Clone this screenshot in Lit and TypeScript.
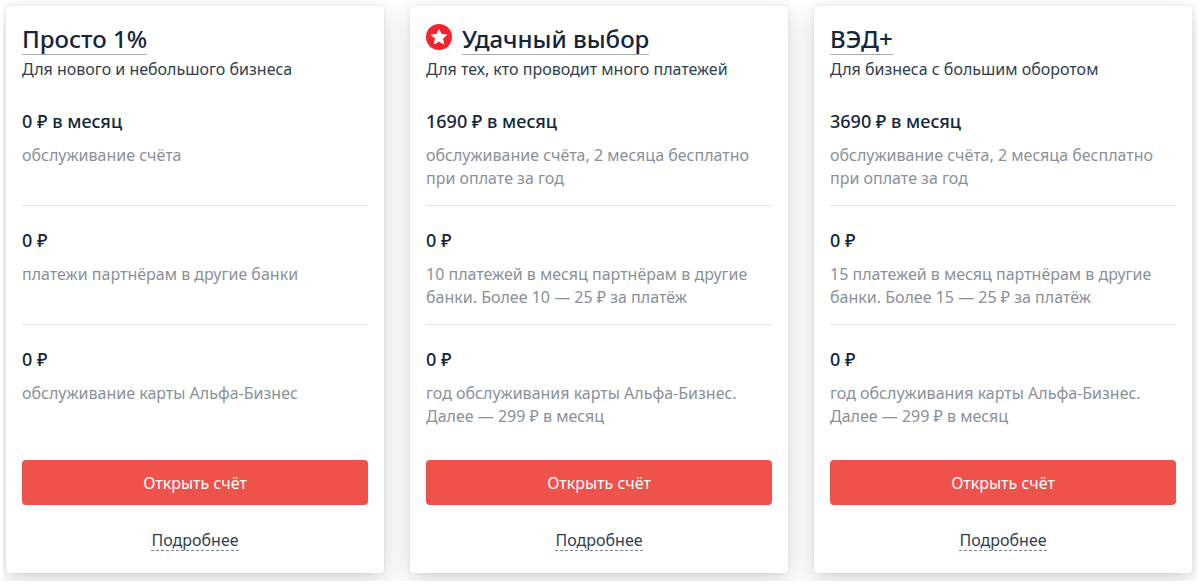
import { LitElement, html, css, svg } from "lit";
import { customElement, property } from "lit/decorators.js";

interface Feature { value: string; text: string; }
interface Plan { name: string; subtitle: string; featured?: boolean; features: Feature[]; }

const plans: Plan[] = [
  {
    name: "Просто 1%",
    subtitle: "Для нового и небольшого бизнеса",
    features: [
      { value: "0 ₽ в месяц", text: "обслуживание счёта" },
      { value: "0 ₽", text: "платежи партнёрам в другие банки" },
      { value: "0 ₽", text: "обслуживание карты Альфа-Бизнес" },
    ],
  },
  {
    name: "Удачный выбор",
    subtitle: "Для тех, кто проводит много платежей",
    featured: true,
    features: [
      { value: "1690 ₽ в месяц", text: "обслуживание счёта, 2 месяца бесплатно при оплате за год" },
      { value: "0 ₽", text: "10 платежей в месяц партнёрам в другие банки. Более 10 — 25 ₽ за платёж" },
      { value: "0 ₽", text: "год обслуживания карты Альфа-Бизнес. Далее — 299 ₽ в месяц" },
    ],
  },
  {
    name: "ВЭД+",
    subtitle: "Для бизнеса с большим оборотом",
    features: [
      { value: "3690 ₽ в месяц", text: "обслуживание счёта, 2 месяца бесплатно при оплате за год" },
      { value: "0 ₽", text: "15 платежей в месяц партнёрам в другие банки. Более 15 — 25 ₽ за платёж" },
      { value: "0 ₽", text: "год обслуживания карты Альфа-Бизнес. Далее — 299 ₽ в месяц" },
    ],
  },
];

const star = svg`<circle cx="13" cy="13" r="13" fill="#f4232c"/><path fill="#fff" stroke="#fff" stroke-width="1" stroke-linejoin="round" d="M13 5.500l2.200 4.900 5.300.6-3.900 3.600 1.100 5.300-4.700-2.700-4.700 2.700 1.100-5.300L5.500 11l5.300-.6z"/>`;

@customElement("plan-card")
export class PlanCard extends LitElement {
  @property({ attribute: false }) plan!: Plan;

  static styles = css`
    :host { position: relative; display: flex; flex-direction: column; min-width: 0; box-sizing: border-box; padding: 17px 16px 22px; border-radius: 4px; background: #fff; color: #13263a; box-shadow: 0 0 4px rgba(0, 0, 0, 0.08), 0 8px 24px rgba(0, 0, 0, 0.16); }
    .head { display: flex; align-items: flex-start; gap: 10px; }
    .badge { flex: none; width: 26px; height: 26px; margin-top: 1px; }
    .title { margin: 0; font-size: 24px; line-height: 31px; font-weight: 500; }
    .title a { display: block; color: inherit; text-decoration: none; border-bottom: 1px solid #a5acb4; }
    .subtitle { margin: 3px 0 0; font-size: 16px; line-height: 22px; color: #2f3e4e; }
    .features { margin: 7px 0 0; padding: 0; list-style: none; }
    .feature { box-sizing: border-box; min-height: 119px; padding-top: 21px; border-bottom: 1px solid #e3e5e8; }
    .feature:last-child { border-bottom: 0; }
    .value { margin: 0; font-size: 18px; line-height: 26px; font-weight: 500; }
    .text { margin: 10px 0 0; font-size: 16px; line-height: 23px; color: #8a9199; }
    .open { margin-top: 16px; height: 45px; border: 0; border-radius: 4px; background: #ef524b; color: #fff; font: inherit; font-size: 16px; cursor: pointer; }
    .more { align-self: center; margin-top: 25px; font-size: 16px; line-height: 20px; color: #2f3e4e; text-decoration: none; border-bottom: 1px dashed #7c8794; }
  `;

  render() {
    const p = this.plan;
    return html`
      <div class="head">
        ${p.featured ? html`<svg class="badge" viewBox="0 0 26 26" aria-hidden="true">${star}</svg>` : ""}
        <h2 class="title"><a href="#">${p.name}</a></h2>
      </div>
      <p class="subtitle">${p.subtitle}</p>
      <ul class="features">
        ${p.features.map((f) => html`<li class="feature"><p class="value">${f.value}</p><p class="text">${f.text}</p></li>`)}
      </ul>
      <button class="open" type="button">Открыть счёт</button>
      <a class="more" href="#">Подробнее</a>
    `;
  }
}

@customElement("app-root")
export class AppRoot extends LitElement {
  static styles = css`
    :host { display: block; padding: 0 3px; font-family: "Noto Sans", "Open Sans", sans-serif; background: #fff; }
    .plans { display: grid; grid-template-columns: repeat(3, minmax(0, 1fr)); gap: 26px; padding: 6px 5px 8px 3px; overflow: hidden; }
  `;

  render() {
    return html`<main class="plans">${plans.map((p) => html`<plan-card .plan=${p}></plan-card>`)}</main>`;
  }
}
